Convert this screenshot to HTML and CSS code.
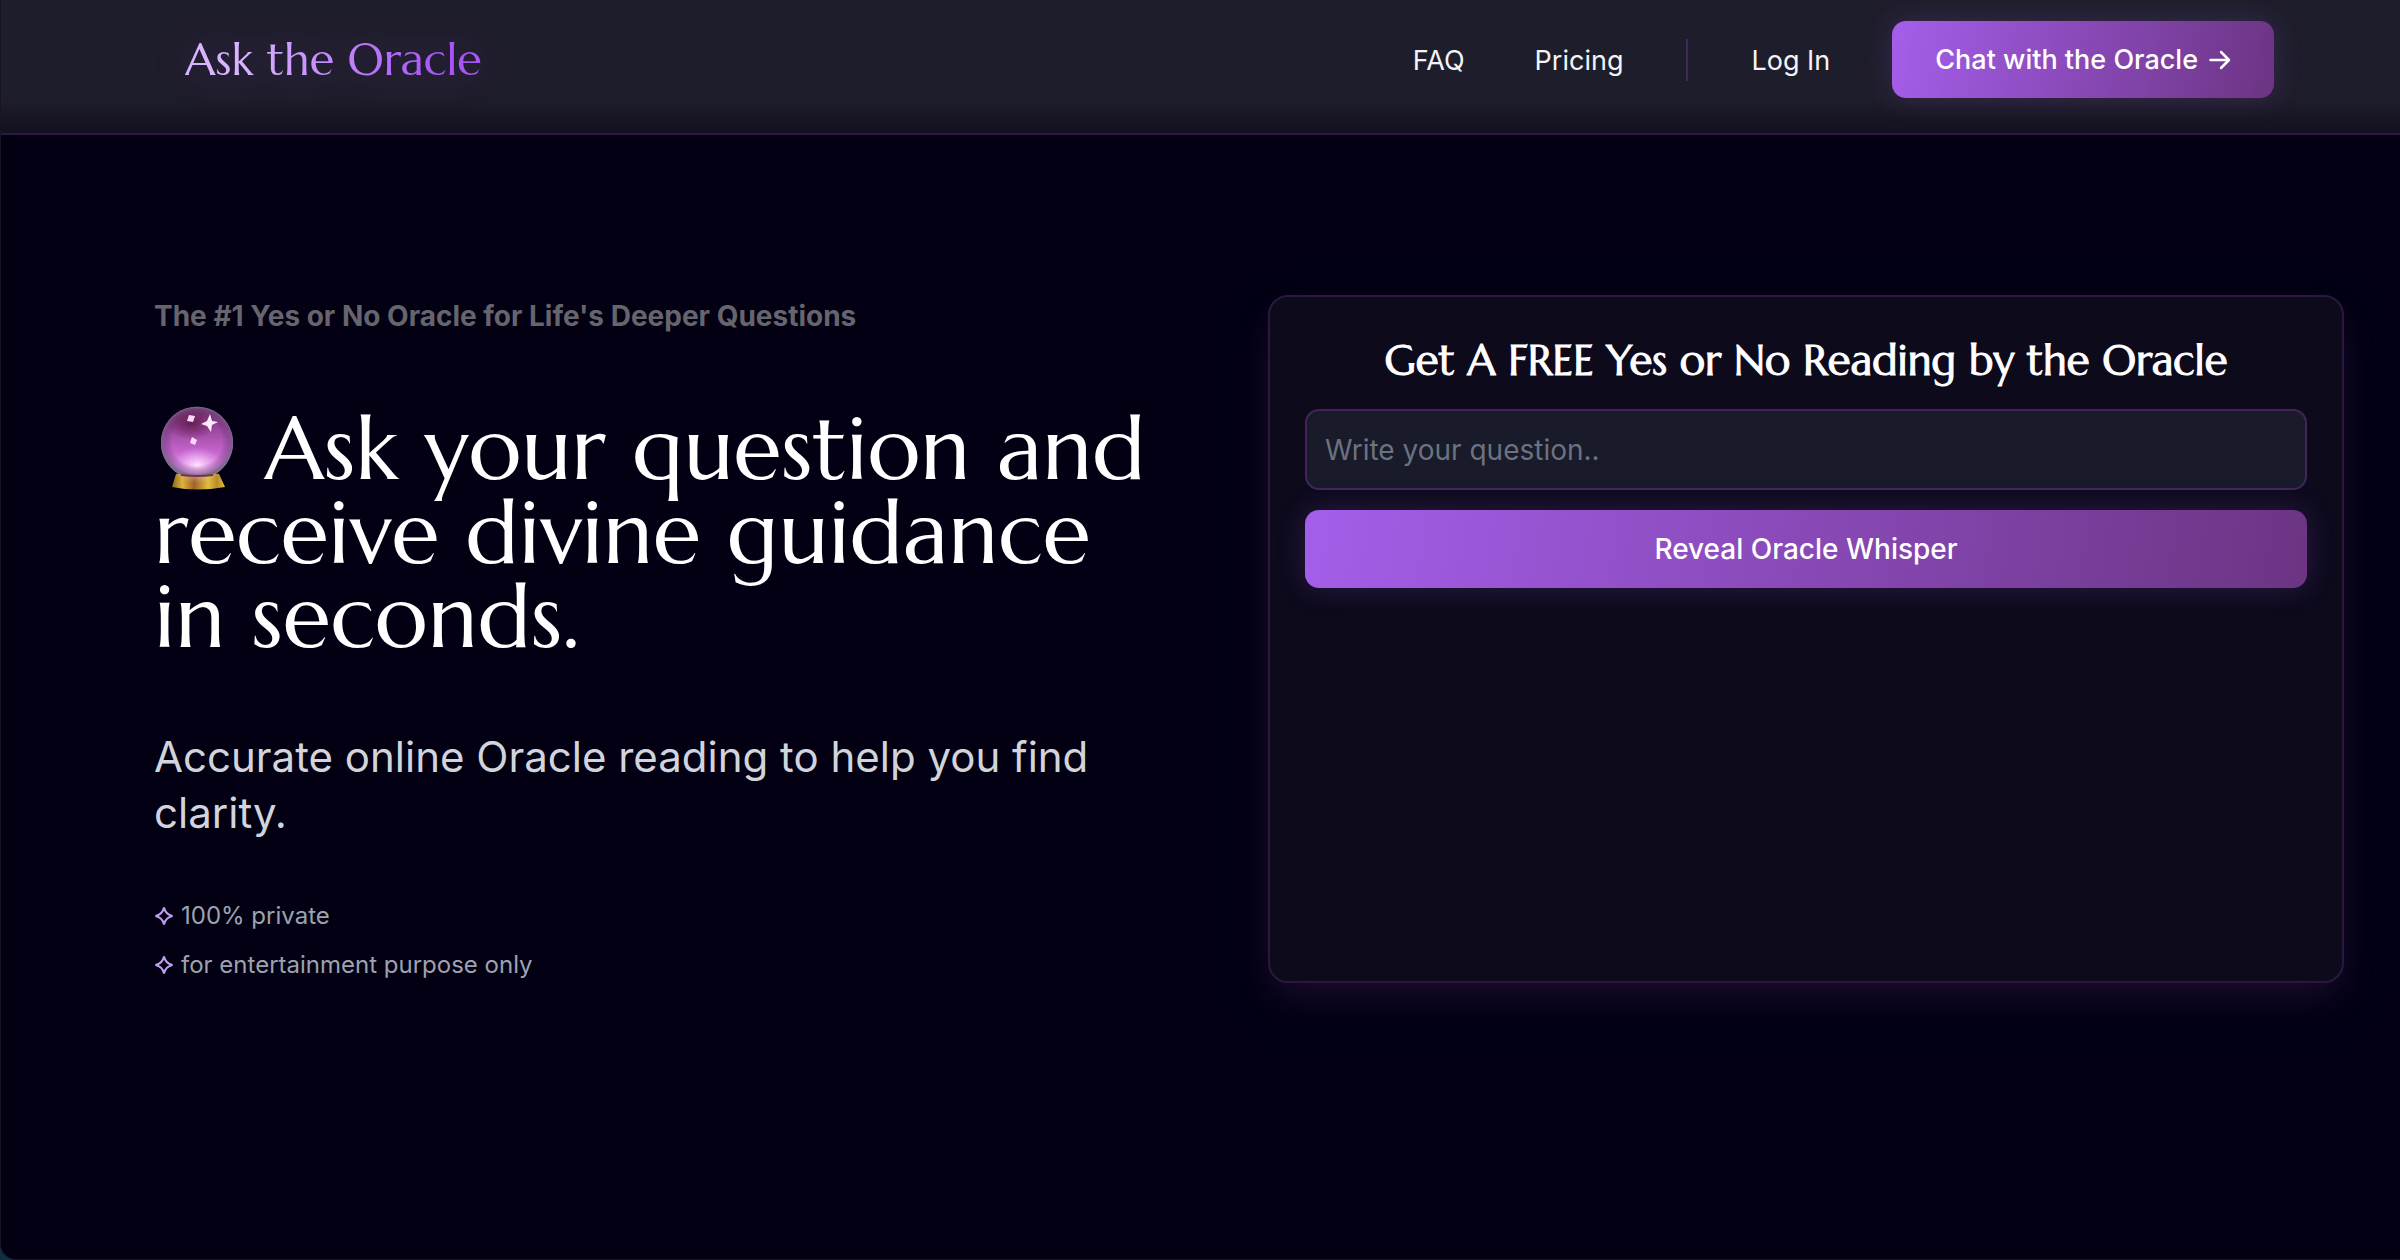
FILE: index.html
```html
<!DOCTYPE html>
<html lang="en">
<head>
<meta charset="utf-8">
<meta name="viewport" content="width=device-width, initial-scale=1">
<title>Ask the Oracle</title>
<link rel="stylesheet" href="styles.css">
</head>
<body>
<div class="page">
  <header class="header">
    <a class="logo" href="#">Ask the Oracle</a>
    <nav class="nav">
      <a class="nav-link" href="#">FAQ</a>
      <a class="nav-link" href="#">Pricing</a>
      <span class="divider"></span>
      <a class="nav-link" href="#">Log In</a>
      <button class="button chat" type="button">Chat with the Oracle
        <svg class="arrow" viewBox="0 0 22 20" aria-hidden="true"><path d="M1.5 10H20M12 2l8 8-8 8"/></svg>
      </button>
    </nav>
  </header>
  <main class="hero">
    <section class="intro">
      <p class="eyebrow">The #1 Yes or No Oracle for Life's Deeper Questions</p>
      <h1 class="title">
        <svg class="ball" viewBox="0 0 84 90" role="img" aria-label="Crystal ball">
          <defs>
            <linearGradient id="glass" x1="0" y1="0" x2="0" y2="1">
              <stop offset="0" stop-color="#79376f"/>
              <stop offset=".3" stop-color="#99459b"/>
              <stop offset=".65" stop-color="#c565ce"/>
              <stop offset="1" stop-color="#f3a8f7"/>
            </linearGradient>
            <radialGradient id="rim">
              <stop offset=".7" stop-color="#40204e" stop-opacity="0"/>
              <stop offset=".93" stop-color="#6d4678" stop-opacity=".5"/>
              <stop offset="1" stop-color="#77708e"/>
            </radialGradient>
            <radialGradient id="shade">
              <stop offset="0" stop-color="#5c1645" stop-opacity=".8"/>
              <stop offset="1" stop-color="#5c1645" stop-opacity="0"/>
            </radialGradient>
            <radialGradient id="glow">
              <stop offset="0" stop-color="#ffe2ff"/>
              <stop offset="1" stop-color="#f5a9fa" stop-opacity="0"/>
            </radialGradient>
            <linearGradient id="gold">
              <stop offset="0" stop-color="#8c671f"/>
              <stop offset=".2" stop-color="#ddb23c"/>
              <stop offset=".42" stop-color="#9d6428"/>
              <stop offset=".68" stop-color="#e0be3f"/>
              <stop offset=".85" stop-color="#b98b2c"/>
              <stop offset="1" stop-color="#e5bd3e"/>
            </linearGradient>
          </defs>
          <path d="M22 73Q43 69 65 73L71 86Q43 91 18 86Z" fill="url(#gold)"/>
          <path d="M27 74A36 36 0 1 1 59 74Q43 76 27 74Z" fill="url(#glass)"/>
          <ellipse cx="37" cy="22" rx="25" ry="17" fill="url(#shade)"/>
          <ellipse cx="43" cy="64" rx="25" ry="18" fill="url(#glow)"/>
          <path d="M27 74A36 36 0 1 1 59 74Q43 76 27 74Z" fill="url(#rim)"/>
          <path d="M27 74Q43 76 59 74" fill="none" stroke="#723c35" stroke-width="2"/>
          <path d="M56 13L58 20L64 21L58 24L57 31L53 25L47 23L53 20Z" fill="#ffe9ff"/>
          <path d="M35 14L41 15L39 21L33 20Z" fill="#ffd6f7"/>
          <path d="M38 36L43 39L41 44L36 42Z" fill="#ffd6fa"/>
        </svg>
        Ask your question and<br>receive divine guidance<br>in seconds.</h1>
      <p class="lead">Accurate online Oracle reading to help you find<br>clarity.</p>
      <ul class="perks">
        <li class="perk"><svg class="star" viewBox="0 0 20 20" aria-hidden="true"><path d="M10 1.5Q11.5 8.5 18.5 10Q11.5 11.5 10 18.5Q8.5 11.5 1.5 10Q8.5 8.5 10 1.5Z"/></svg>100% private</li>
        <li class="perk"><svg class="star" viewBox="0 0 20 20" aria-hidden="true"><path d="M10 1.5Q11.5 8.5 18.5 10Q11.5 11.5 10 18.5Q8.5 11.5 1.5 10Q8.5 8.5 10 1.5Z"/></svg>for entertainment purpose only</li>
      </ul>
    </section>
    <form class="card">
      <h2 class="card-title"><label for="question">Get A FREE Yes or No Reading by the Oracle</label></h2>
      <input class="question" id="question" type="text" placeholder="Write your question..">
      <button class="button reveal" type="button">Reveal Oracle Whisper</button>
    </form>
  </main>
</div>
</body>
</html>
```
FILE: styles.css
```css
* {
  box-sizing: border-box;
}

html {
  background: #10303f;
}

body {
  margin: 0;
  font-family: Inter, "Liberation Sans", sans-serif;
  font-size: 28px;
  line-height: 40px;
  color: #fff;
}

.page {
  min-height: 100vh;
  background: #030014;
  border-left: 1px solid #171426;
  border-bottom: 1px solid #171426;
  border-bottom-left-radius: 16px;
}

.header {
  display: flex;
  align-items: center;
  justify-content: space-between;
  padding: 21px 126px 35px 184px;
  background: linear-gradient(#1e1d2b 100px, #13101f 133px);
  border-bottom: 2px solid #2b1a3d;
}

.logo {
  font-family: Marcellus, Lato, sans-serif;
  font-size: 45px;
  line-height: 56px;
  text-decoration: none;
  color: transparent;
  background: linear-gradient(90deg, #d8b4fe 20%, #a855f7 85%);
  background-clip: text;
  filter: drop-shadow(0 0 18px rgba(168, 85, 247, 0.25));
}

.nav {
  display: flex;
  align-items: center;
}

.nav-link {
  margin-right: 70px;
  padding-top: 2px;
  font-size: 27px;
  color: #f3f4f6;
  text-decoration: none;
}

.divider {
  width: 2px;
  height: 42px;
  margin: 0 63px 0 -7px;
  background: #43265a;
}

.button {
  border: 0;
  border-radius: 14px;
  color: #fff;
  font: 500 28px/40px Inter, "Liberation Sans", sans-serif;
  background: linear-gradient(100deg, #a55eea, #6c3483);
  box-shadow: 0 0 30px rgba(165, 94, 234, 0.2);
}

.chat {
  display: flex;
  align-items: center;
  gap: 11px;
  margin-left: -8px;
  padding: 19px 43px 18px;
  font-size: 27px;
}

.arrow {
  width: 22px;
  height: 20px;
  fill: none;
  stroke: #fff;
  stroke-width: 2.5;
  stroke-linecap: round;
  stroke-linejoin: round;
}

.hero {
  display: grid;
  grid-template-columns: 1fr 1fr;
  align-items: start;
  gap: 38px;
  padding: 160px 56px 80px 153px;
}

.eyebrow {
  margin: 0;
  padding-top: 1px;
  font-weight: 700;
  color: #66656d;
}

.title {
  margin: 65px 0 70px;
  font-family: Marcellus, Lato, sans-serif;
  font-size: 88px;
  font-weight: 400;
  line-height: 84px;
  white-space: nowrap;
}

.ball {
  width: 84px;
  height: 90px;
  vertical-align: -12px;
}

.lead {
  margin: 0 0 55px;
  font-size: 42px;
  line-height: 56px;
  color: #d1d5db;
}

.perks {
  display: grid;
  gap: 9px;
  margin: 0;
  padding: 0;
  list-style: none;
  font-size: 24px;
  color: #9ca3af;
}

.perk {
  display: flex;
  align-items: center;
  gap: 7px;
}

.star {
  width: 20px;
  height: 20px;
  fill: none;
  stroke: #c4a0f0;
  stroke-width: 2;
}

.card {
  display: flex;
  flex-direction: column;
  min-height: 688px;
  padding: 36px 35px;
  background: #0d0a1c;
  border: 2px solid #2b183e;
  border-radius: 20px;
  box-shadow: 0 16px 36px -4px rgba(108, 52, 131, 0.2), 0 20px 60px rgba(30, 25, 40, 0.2);
}

.card-title {
  margin: 0 0 20px;
  font-family: Marcellus, Lato, sans-serif;
  font-size: 42px;
  font-weight: 600;
  line-height: 56px;
  text-align: center;
  -webkit-text-stroke: 1px #fff;
}

.question {
  width: 100%;
  height: 81px;
  padding: 0 18px;
  color: #fff;
  font: 400 28px/40px Inter, "Liberation Sans", sans-serif;
  background: #191a2a;
  border: 2px solid #41255a;
  border-radius: 14px;
}

.question::placeholder {
  color: #6b7280;
}

.reveal {
  margin-top: 20px;
  padding: 19px;
}
```
